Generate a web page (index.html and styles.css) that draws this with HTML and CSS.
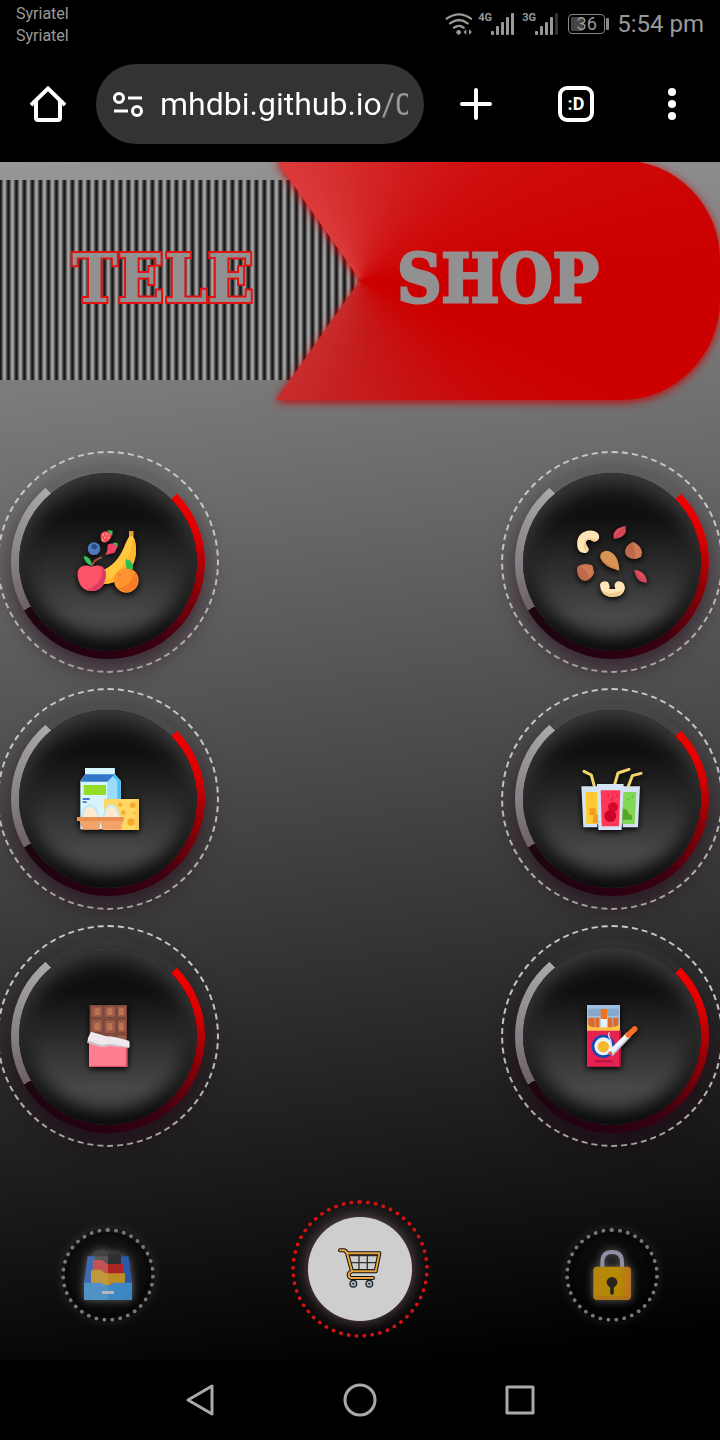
FILE: index.html
```html
<!DOCTYPE html>
<html lang="en">
<head>
<meta charset="utf-8">
<meta name="viewport" content="width=device-width, initial-scale=1">
<title>TELE SHOP</title>
<link rel="stylesheet" href="styles.css">
</head>
<body>
<div class="phone">
  <div class="status">
    <div class="carriers"><span>Syriatel</span><span>Syriatel</span></div>
    <div class="indicators">
      <svg class="wifi" viewBox="264 36 90 72" width="30" height="24" fill="none" stroke="#999" stroke-width="7" stroke-linecap="round">
        <path d="M272 56Q309 30 345 56M282 70Q309 50 335 70M294 83Q309 72 323 83"/>
        <circle cx="308" cy="97" r="7" fill="#999" stroke="none"/>
        <path d="M331 88L322 96L331 104ZM339 88L348 96L339 104Z" fill="#999" stroke="none"/>
      </svg>
      <span class="net">4G</span>
      <svg class="bars" viewBox="402 36 75 72" width="25" height="24" fill="#999">
        <rect x="405" y="93" width="9" height="12" rx="3"/><rect x="420" y="78" width="9" height="27" rx="3"/><rect x="435" y="66" width="9" height="39" rx="3"/><rect x="450" y="51" width="9" height="54" rx="3"/><rect x="465" y="39" width="9" height="66" rx="3"/>
      </svg>
      <span class="net">3G</span>
      <svg class="bars" viewBox="402 36 75 72" width="25" height="24" fill="#999">
        <rect x="405" y="93" width="9" height="12" rx="3"/><rect x="420" y="78" width="9" height="27" rx="3"/><rect x="435" y="66" width="9" height="39" rx="3"/><rect x="450" y="51" width="9" height="54" rx="3"/><rect x="465" y="39" width="9" height="66" rx="3" fill="#333"/>
      </svg>
      <span class="battery">36</span>
      <span class="clock">5:54 pm</span>
    </div>
  </div>

  <div class="toolbar">
    <button class="tool" type="button" aria-label="Home">
      <svg viewBox="0 0 36 36" width="36" height="36" fill="none" stroke="#fff" stroke-width="4" stroke-linejoin="round"><path d="M1 19L18 2.500L35 19" stroke-linejoin="miter"/><path d="M6 15V32Q6 34 8 34H28Q30 34 30 32V15"/></svg>
    </button>
    <div class="address">
      <button class="site-info" type="button" aria-label="Site information">
        <svg viewBox="0 0 32 26" width="32" height="26" fill="none" stroke="#fff" stroke-width="3"><circle cx="7" cy="7" r="4.500"/><path d="M16 7H30M2 20H16"/><circle cx="25" cy="20" r="4.500"/></svg>
      </button>
      <input class="url" type="text" aria-label="Address" value="mhdbi.github.io/0" spellcheck="false">
    </div>
    <button class="tool" type="button" aria-label="New tab">
      <svg viewBox="0 0 32 32" width="32" height="32" stroke="#fff" stroke-width="4" stroke-linecap="round"><path d="M16 2V30M2 16H30"/></svg>
    </button>
    <button class="tool" type="button" aria-label="Tabs"><span class="tabs">:D</span></button>
    <button class="tool" type="button" aria-label="Menu">
      <svg viewBox="0 0 8 32" width="8" height="32" fill="#fff"><circle cx="4" cy="4" r="4"/><circle cx="4" cy="16" r="4"/><circle cx="4" cy="28" r="4"/></svg>
    </button>
  </div>

  <main class="shop-page">
    <h1 class="banner"><span class="tele">TELE</span> <span class="shop">SHOP</span></h1>

    <div class="categories">
      <button class="category" type="button" aria-label="Fruit"><span class="knob"><span class="disc">
        <svg viewBox="228 270 192 192" width="64" height="64">
          <path d="M387 273H400V290Q409 305 408 340Q405 380 370 410Q345 430 310 432L305 392Q350 375 372 322Q380 300 387 290Z" fill="#ffc83f"/>
          <path d="M399 290Q409 305 408 340Q405 380 370 410Q345 430 310 432L312 426Q350 405 372 372Q397 340 399 290Z" fill="#ffb52e"/>
          <path d="M387 273H400V288H388Z" fill="#e0a02c"/>
          <path d="M302 292Q300 278 315 274Q332 275 335 286Q332 302 316 308Q301 308 302 292Z" fill="#f75063"/>
          <path d="M308 282H312V286H308ZM318 281H322V285H318ZM312 291H316V295H312ZM323 291H327V295H323ZM306 299H310V303H306Z" fill="#ffd782"/>
          <path d="M322 270L338 272L337 287L329 280ZM338 308L352 308L354 322L344 318Z" fill="#2fc258"/>
          <path d="M323 314Q340 304 352 321L344 338L316 345L322 331Z" fill="#ee4264"/>
          <circle cx="282" cy="326" r="19" fill="#4e79ba"/><path d="M274 315L286 312L293 321L285 329L276 325Z" fill="#254c83"/>
          <path d="M276 380Q278 360 306 352" fill="none" stroke="#955244" stroke-width="6"/>
          <path d="M251 348Q274 350 276 378Q253 371 251 348Z" fill="#32c458"/>
          <path d="M233 407C230 381 252 370 275 381C297 370 321 379 318 409C316 437 299 454 275 453C251 454 235 434 233 407Z" fill="#ff5369"/>
          <path d="M298 378Q322 385 317 411Q310 447 282 453L263 449Q303 433 307 398Q308 385 298 378Z" fill="#df3d60"/>
          <circle cx="379" cy="421" r="37" fill="#ff9330"/><path d="M403 394Q421 418 407 444L384 457L353 446Q397 438 403 394Z" fill="#f57d28"/>
          <path d="M377 358Q401 362 400 388L380 386Q376 373 377 358Z" fill="#27bf51"/><circle cx="360" cy="406" r="3" fill="#de7721"/><circle cx="371" cy="400" r="2" fill="#de7721"/>
        </svg></span></span></button>

      <button class="category" type="button" aria-label="Nuts"><span class="knob"><span class="disc">
        <svg viewBox="246 243 240 240" width="80" height="80">
          <path d="M262 316C256 282 286 262 314 271Q332 278 326 295Q317 307 303 298C288 292 283 306 293 318Q301 327 290 335C275 338 264 332 262 316Z" fill="#ffe4b5"/>
          <path d="M284 300Q292 285 322 297Q314 307 303 298C289 292 283 306 293 318L291 333Q275 321 284 300Z" fill="#f5cc91"/>
          <path d="M330 429Q337 416 354 423Q361 434 358 444H376Q369 427 383 421Q403 419 405 441Q401 468 367 468Q331 467 330 429Z" fill="#ffe5b7"/><path d="M334 448Q365 466 400 447Q387 468 365 468Q343 466 334 448Z" fill="#f5c98d"/>
          <path d="M407 255L407 274Q397 294 371 292Q366 262 407 255ZM433 387Q466 388 471 424Q439 427 433 387Z" fill="#e54c5c"/>
          <path d="M404 257Q386 268 371 292Q397 295 404 274ZM434 389L470 424Q443 426 434 389Z" fill="#d04459"/>
          <path d="M331 351Q327 333 348 329Q386 333 388 389Q341 378 331 351Z" fill="#d99352"/><path d="M332 352Q352 374 387 388Q342 379 332 352Z" fill="#c07d4a"/>
          <path d="M429 302Q455 314 456 336Q449 356 429 354Q404 350 405 329Q409 311 429 302ZM262 377Q283 362 306 373L313 396Q304 417 284 420Q257 413 262 377Z" fill="#bd694a"/>
          <path d="M429 303L437 354L454 347Q460 318 429 303ZM266 374Q289 382 298 411Q318 397 306 373Z" fill="#cf7a55"/>
        </svg></span></span></button>

      <button class="category" type="button" aria-label="Dairy and eggs"><span class="knob"><span class="disc">
        <svg viewBox="48 48 192 192" width="64" height="64">
          <path d="M75 51H164V69L182 90V235H61V90L75 70Z" fill="#d7f4ff"/><path d="M142 90L164 69L182 90V235H142Z" fill="#9adcfa"/><path d="M164 69L182 90V235H172V90L158 76Z" fill="#4abff6"/>
          <path d="M75 70H164L142 92H61Z" fill="#3276ca"/><path d="M75 51H164V69H75Z" fill="#d7f5ff"/>
          <path d="M71 102H138V132H71Z" fill="#93dc26"/><path d="M68 141H89V147H68ZM68 151H80V156H68Z" fill="#427cbc"/>
          <path d="M132 144H237V237H132Z" fill="#ffd765"/><path d="M225 144H237V237H225Z" fill="#fccb58"/>
          <g fill="#f8aa2d"><circle cx="181" cy="161" r="6"/><circle cx="218" cy="163" r="9"/><circle cx="190" cy="185" r="7"/><circle cx="213" cy="213" r="11"/><circle cx="222" cy="187" r="3"/></g>
          <path d="M63 205Q64 164 90 158Q116 164 119 205ZM127 205Q131 163 154 158Q179 167 182 205Z" fill="#bde9fa"/>
          <path d="M68 202Q74 169 91 166Q108 171 115 202ZM132 202Q137 169 154 165Q172 173 177 202Z" fill="#ffe9cf"/>
          <path d="M51 198H191V210H189L183 236H126L122 210L118 236H68L59 210H51Z" fill="#f3a36a"/><path d="M51 198H191V210H51Z" fill="#e88f52"/>
        </svg></span></span></button>

      <button class="category" type="button" aria-label="Juice"><span class="knob"><span class="disc">
        <svg viewBox="60 48 192 192" width="64" height="64">
          <path d="M72 61L94 72L103 106M163 104L174 66L207 55M205 106L217 74L243 67" fill="none" stroke="#f4d36b" stroke-width="9" stroke-linecap="round" stroke-linejoin="round"/>
          <path d="M64 106H116L112 229H70ZM185 106H240L234 229H188Z" fill="#d3e1f1"/><path d="M77 123H114V219H79Z" fill="#ffcb31"/><path d="M187 123H229L224 219H187Z" fill="#81d957"/>
          <path d="M88 172H107V190H114V215H97L101 192H89ZM187 175H201V189H217L211 206H189Z" fill="#f39c20"/><path d="M187 174Q203 171 205 188Q220 191 216 206H187Z" fill="#4ca92c"/>
          <path d="M111 99H191L185 237H115Z" fill="#d5e4f7"/><path d="M122 118H181L177 226H125Z" fill="#ff3859"/>
          <circle cx="159" cy="169" r="15" fill="#d7082d"/><circle cx="151" cy="195" r="18" fill="#ca0429"/>
          <path d="M142 132H147V136H142ZM156 137H161V141H156ZM170 131H174V136H170ZM154 145H159V149H154Z" fill="#c9153a"/><path d="M94 135H98V139H94Z" fill="#e69a1f"/><path d="M203 143H208V148H203ZM215 135H219V139H215Z" fill="#58b035"/>
        </svg></span></span></button>

      <button class="category" type="button" aria-label="Chocolate"><span class="knob"><span class="disc">
        <svg viewBox="48 54 192 192" width="64" height="64">
          <path d="M89 57H201V170H89Z" fill="#824b40"/><g fill="#9a5c48" stroke="#704036" stroke-width="2"><path d="M93 60H128V94H93ZM133 60H167V94H133ZM172 60H199V94H172ZM93 101H128V139H93ZM133 101H167V142H133ZM172 101H199V140H172ZM172 147H199V165H172Z"/></g>
          <path d="M104 67H119V87H104ZM142 67H157V87H142ZM177 67H191V87H177ZM104 111H119V132H104ZM142 111H157V132H142ZM177 111H191V132H177Z" fill="#bd7552"/>
          <path d="M87 170H202V242H87Z" fill="#ff7f91"/><path d="M87 239H202V243H87ZM197 170H202V239H197Z" fill="#df566f"/>
          <path d="M93 137L139 151Q168 151 208 165L209 184L149 180L125 183L82 170L84 156Z" fill="#eee7eb"/><path d="M84 164L125 178L151 174L207 183V186L151 179L126 183L82 170Z" fill="#c8bdc5"/>
        </svg></span></span></button>

      <button class="category" type="button" aria-label="Cigarettes"><span class="knob"><span class="disc">
        <svg viewBox="60 54 192 192" width="64" height="64">
          <path d="M81 57H180V133H81Z" fill="#9fc0de"/><path d="M85 68H176V90H85Z" fill="#86a9cc"/>
          <path d="M85 95H104V127H85ZM106 95H118V127H106ZM144 95H157V127H144ZM160 95H175V127H160Z" fill="#e46927"/><path d="M122 69H141V99H122Z" fill="#f1711f"/><path d="M122 99H141V127H122Z" fill="#e7f3fa"/>
          <path d="M81 112Q86 124 104 124H155Q171 123 180 112V135H81Z" fill="#ffc246"/><path d="M81 134H182V242H81Z" fill="#e72250"/><path d="M178 134H183V242H178Z" fill="#a7143c"/>
          <circle cx="130" cy="181" r="35" fill="#124ab2"/><circle cx="130" cy="181" r="27" fill="#e9f4fa"/><circle cx="130" cy="182" r="17" fill="#f4b72f"/><path d="M104 222H158V230H104Z" fill="#bb1640"/>
          <path d="M151 202L207 145" stroke="#f1f7fb" stroke-width="17"/><path d="M156 208L212 150" stroke="#b3c8da" stroke-width="5"/><path d="M205 147L224 129" stroke="#fa6e24" stroke-width="17" stroke-linecap="round"/><circle cx="151" cy="202" r="6" fill="#e95555"/>
          <path d="M148 139Q143 151 151 160Q156 174 151 184" fill="none" stroke="#f5dce2" stroke-width="4"/>
        </svg></span></span></button>
    </div>

    <nav class="dock" aria-label="Shop">
      <button class="mini" type="button" aria-label="Orders">
        <svg class="dim" viewBox="129 180 150 150" width="50" height="50">
          <path d="M143 199H265L276 278V330H132V278Z" fill="#2f66c5"/><path d="M164 190Q165 181 175 181H194L204 189H243V225H164Z" fill="#4b4b4b"/><path d="M204 190H243V225H204Z" fill="#353535"/>
          <path d="M159 216Q160 210 165 210H187L200 222H249V258H159Z" fill="#df4545"/><path d="M204 222H249V258H204Z" fill="#c52727"/>
          <path d="M153 245Q153 239 159 239H183L195 250H255V280H217L210 285H191L184 280H153Z" fill="#d7a329"/>
          <path d="M132 278H185L192 285H213L220 278H276V327Q276 330 273 330H135Q132 330 132 327Z" fill="#459be0"/><path d="M143 199H204V330H132V278Z" fill="#fff" opacity=".13"/><path d="M186 303H222V312H186Z" fill="#c9d2dc"/>
        </svg></button>
      <button class="cart" type="button" aria-label="Cart"><span class="cart-face">
        <svg viewBox="894 171 132 132" width="44" height="44" fill="none">
          <path d="M930 197H1016M934 218H1012M936 240H1006M957 190V242M982 190V242" stroke="#343434" stroke-width="4"/>
          <path d="M900 181H910Q918 181 921 190L936 244H1007L1018 190H923M936 244Q925 248 926 256Q927 264 936 264H999" stroke="#111" stroke-width="12" stroke-linejoin="round" stroke-linecap="round"/>
          <path d="M900 181H910Q918 181 921 190L936 244H1007L1018 190H923M936 244Q925 248 926 256Q927 264 936 264H999" stroke="#e7a43c" stroke-width="6" stroke-linejoin="round" stroke-linecap="round"/>
          <g fill="#aebdca" stroke="#222" stroke-width="4"><circle cx="940" cy="281" r="10"/><circle cx="988" cy="281" r="10"/></g><circle cx="940" cy="281" r="3" fill="#111"/><circle cx="988" cy="281" r="3" fill="#111"/>
        </svg></span></button>
      <button class="mini" type="button" aria-label="Log in">
        <svg class="dim" viewBox="141 120 150 150" width="50" height="50">
          <defs><linearGradient id="gold"><stop offset="0" stop-color="#d49a12"/><stop offset=".65" stop-color="#d1a000"/><stop offset="1" stop-color="#d98327"/></linearGradient></defs>
          <path d="M187 180V157Q187 126 216 126Q246 126 246 157V180" fill="none" stroke="#aaa3bb" stroke-width="12"/>
          <rect x="160" y="170" width="113" height="100" rx="11" fill="url(#gold)"/><path d="M164 257H270V264Q268 270 262 270H171Q164 270 164 257Z" fill="#c77d25" opacity=".6"/>
          <circle cx="216" cy="217" r="16" fill="#2b2921"/><path d="M216 219V249" stroke="#2b2921" stroke-width="11" stroke-linecap="round"/>
        </svg></button>
    </nav>
  </main>

  <nav class="system" aria-label="System">
    <button type="button" aria-label="Back"><svg viewBox="0 0 36 36" width="36" height="36" fill="none" stroke="#aaa" stroke-width="3" stroke-linejoin="round"><path d="M6 18L30 4V32Z"/></svg></button>
    <button type="button" aria-label="Home screen"><svg viewBox="0 0 36 36" width="36" height="36" fill="none" stroke="#aaa" stroke-width="3"><circle cx="18" cy="18" r="15"/></svg></button>
    <button type="button" aria-label="Recent apps"><svg viewBox="0 0 36 36" width="36" height="36" fill="none" stroke="#aaa" stroke-width="3" stroke-linejoin="round"><path d="M5 5H31V31H5Z"/></svg></button>
  </nav>
</div>
</body>
</html>
```
FILE: styles.css
```css
* { box-sizing: border-box; }
body { margin: 0; background: #000; font-family: Roboto, "Liberation Sans", sans-serif; }
button { padding: 0; border: 0; background: none; color: inherit; font: inherit; }
svg { display: block; flex: none; }
.phone { min-height: 100vh; display: flex; flex-direction: column; }

.status { display: flex; justify-content: space-between; height: 48px; padding: 3px 16px 0; color: #999; }
.carriers { display: flex; flex-direction: column; font-size: 16px; line-height: 22px; }
.indicators { display: flex; align-items: center; height: 42px; }
.net { align-self: flex-start; width: 13px; padding-top: 9px; margin-left: 4px; font-size: 11px; line-height: 12px; font-weight: 700; }
.bars { margin-right: 3px; margin-left: -1px; }
.battery { position: relative; width: 37px; height: 20px; margin: 0 12px 0 6px; border: 1px solid #888; border-radius: 4px; background: linear-gradient(90deg, #444 40%, transparent 40%) content-box; padding: 2px; font-size: 18px; line-height: 14px; text-align: center; }
.battery::after { content: ""; position: absolute; right: -5px; top: 3px; width: 3px; height: 12px; border-radius: 1px; background: #888; }
.clock { font-size: 24px; line-height: 28px; }

.toolbar { display: grid; grid-template-columns: 96px minmax(0, 1fr) 104px 96px 96px; padding: 16px 0 18px; }
.tool { display: grid; place-items: center; height: 80px; }
.address { display: flex; align-items: center; height: 80px; padding: 0 16px; border-radius: 40px; background: #333; }
.site-info { margin-right: 16px; }
.url { flex: 1; min-width: 0; padding: 0; border: 0; outline: 0; font: 32px/40px Roboto, "Liberation Sans", sans-serif; color: transparent; background: linear-gradient(90deg, #fff 222px, #999 222px); background-clip: text; -webkit-background-clip: text; }
.tabs { display: grid; place-items: center; width: 36px; height: 36px; border: 4px solid #fff; border-radius: 9px; color: #fff; font-size: 18px; line-height: 20px; font-weight: 700; }

.shop-page { flex: 1; overflow: hidden; display: flex; flex-direction: column; padding-bottom: 22px; background: linear-gradient(173deg, #979797, #000 98%); }
.banner { display: grid; grid-template-columns: 1fr 1fr; height: 238px; margin: 0 0 51px; color: #919191; font: 700 68px/80px "DejaVu Serif Condensed", "DejaVu Serif", serif; paint-order: stroke fill; }
.tele { display: grid; place-items: center; height: 200px; margin-top: 18px; padding: 0 34px 4px 0; background: repeating-linear-gradient(90deg, #151515 0, #1c1c1c 1px, #aaa 4px, #a2a2a2 5px, #151515 8px); -webkit-text-stroke: 4px #e01212; }
.shop { position: relative; display: grid; place-items: center; padding: 0 84px 6px 0; filter: drop-shadow(0 2px 5px #c00); -webkit-text-stroke: 3px #9b8d8d; }
.shop::before { content: ""; position: absolute; z-index: -1; inset: -2px 0 0 -84px; border-radius: 0 100px 100px 0; clip-path: polygon(0 0, 100% 0, 100% 100%, 0 100%, 84px 50%); background: conic-gradient(at 84px 50%, #d42828, #cf1010 45deg, #c00 85deg, #c00 115deg, #c81010 150deg, #c51c1c 180deg, #c72c2c 215deg, #c00 270deg, #db3b3b 325deg, #d42828); }

.categories { display: grid; grid-template-columns: 30% 30%; justify-content: space-between; gap: 15px 0; margin-bottom: 53px; }
.category { display: grid; justify-content: center; grid-template-columns: 222px; height: 222px; border-radius: 50%; }
.knob { display: grid; place-items: center; border: 2px dashed #ccc; border-radius: 50%; position: relative; }
.knob::before { content: ""; position: absolute; inset: 12px; border-radius: 50%; background: conic-gradient(rgb(50 40 46 / 20%) 45deg, #f20000 45deg, #d90000 75deg, #840008 110deg, #3c0010 145deg, #260012 185deg, #1c0710 240deg, #6d6067 240deg, #858085 270deg, #aaa 320deg, rgb(50 40 46 / 20%) 320deg); box-shadow: 0 10px 24px rgb(35 5 24 / 60%); }
.disc { position: relative; display: grid; place-items: center; width: 178px; height: 178px; border-radius: 50%; background: linear-gradient(#101010 25%, #494949 80%); box-shadow: inset 0 12px 20px #3c3c3c, inset 0 -12px 20px #000; }
.disc svg { filter: drop-shadow(0 2px 3px #000); }

.dock { display: grid; grid-template-columns: 30% 40% 30%; align-items: end; justify-items: center; margin-top: auto; }
.mini { display: grid; place-items: center; width: 94px; height: 94px; margin-bottom: 16px; border: 4px dotted #777; border-radius: 50%; box-shadow: 0 0 10px rgb(255 255 255 / 10%), inset 0 0 14px #000; }
.dim { opacity: .86; filter: drop-shadow(0 0 4px #777); }
.cart { display: grid; place-items: center; width: 138px; height: 138px; border: 4px dotted #d51212; border-radius: 50%; }
.cart-face { display: grid; place-items: center; width: 104px; height: 104px; border-radius: 50%; background: #cecece; box-shadow: 0 0 16px rgb(255 190 200 / 40%); }

.system { display: grid; grid-template-columns: repeat(3, 160px); justify-content: center; height: 80px; background: #000; }
.system button { display: grid; place-items: center; }
```
